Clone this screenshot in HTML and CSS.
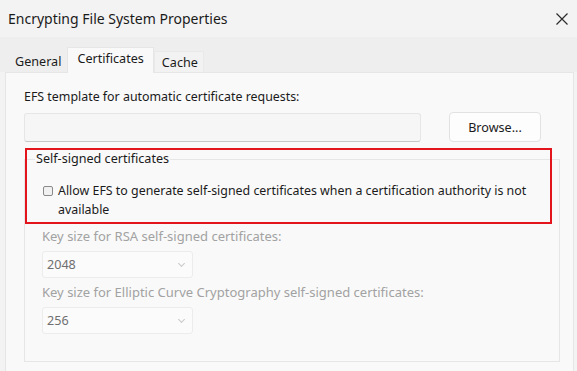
FILE: index.html
```html
<!DOCTYPE html>
<html lang="en">
<head>
  <meta charset="UTF-8" />
  <title>Encrypting File System Properties</title>
  <link rel="stylesheet" href="styles.css">
</head>
<body>
  <div class="window">
    <div class="titlebar">
      <span class="title">Encrypting File System Properties</span>
      <svg class="close" width="12" height="12" viewBox="0 0 12 12">
        <path d="M0.5 0.5 L11.5 11.5 M11.5 0.5 L0.5 11.5" stroke="#2b2b2b" stroke-width="1.2" fill="none"/>
      </svg>
    </div>

    <div class="tabs">
      <div class="tab">General</div>
      <div class="tab active">Certificates</div>
      <div class="tab boxed">Cache</div>
    </div>

    <div class="panel">
      <label class="label">EFS template for automatic certificate requests:</label>
      <div class="template-row">
        <input type="text" class="template-input" />
        <button class="btn">Browse...</button>
      </div>

      <fieldset class="group">
        <legend>Self-signed certificates</legend>
        <label class="check">
          <span class="box"></span>
          <span class="check-text">Allow EFS to generate self-signed certificates when a certification authority is not available</span>
        </label>

        <div class="disabled">
          <div class="label">Key size for RSA self-signed certificates:</div>
          <div class="select">2048 <span class="chev"></span></div>
          <div class="label">Key size for Elliptic Curve Cryptography self-signed certificates:</div>
          <div class="select">256 <span class="chev"></span></div>
        </div>
      </fieldset>

      <!-- annotation drawn on top of the screenshot -->
      <div class="highlight"></div>
    </div>
  </div>
</body>
</html>
```

FILE: styles.css
```css
body {
  margin: 0;
  font-family: "Noto Sans", "Open Sans", sans-serif;
  font-size: 12.4px;
  color: #1b1b1b;
  background: #f3f3f3;
  width: 577px;
  height: 371px;
  overflow: hidden;
}

.titlebar {
  height: 37px;
  display: flex;
  align-items: center;
  justify-content: space-between;
  padding: 0 9px 0 8px;
  background: #f3f3f3;
}

.title {
  font-size: 14px;
  color: #1a1a1a;
  margin-top: -1px;
}

.close {
  margin-top: 1px;
}

.tabs {
  height: 35px;
  background: #eeeeee;
  display: flex;
  align-items: flex-end;
  padding-left: 8px;
  box-sizing: border-box;
}

.tab {
  height: 22px;
  line-height: 22px;
  padding: 0 6px 0 7px;
  font-size: 12.6px;
  color: #1b1b1b;
  margin-bottom: -1px;
  position: relative;
  box-sizing: border-box;
}

.tab.active {
  height: 26px;
  line-height: 22px;
  padding: 0 9px;
  background: #f9f9f9;
  border: 1px solid #e6e6e6;
  border-bottom: none;
  z-index: 1;
}

.tab.boxed {
  background: #f2f2f2;
  border: 1px solid #e9e9e9;
  border-bottom: none;
  line-height: 21px;
  padding: 0 7px;
  width: 50px;
}

.panel {
  position: relative;
  margin: 0 3px 0 5px;
  background: #f9f9f9;
  border: 1px solid #e6e6e6;
  padding: 15px 13px 12px 18px;
}

.label {
  display: block;
  line-height: 18px;
}

.template-row {
  display: flex;
  align-items: center;
  margin-top: 6px;
  height: 30px;
}

.template-input {
  width: 397px;
  height: 29px;
  box-sizing: border-box;
  margin: 1px 0 0 0;
  padding: 0 6px;
  background: #f6f6f6;
  border: 1px solid #e6e6e6;
  border-bottom-color: #c6c6c6;
  border-radius: 3px;
}

.btn {
  margin-left: 28px;
  width: 92px;
  height: 30px;
  box-sizing: border-box;
  background: #fdfdfd;
  border: 1px solid #e2e2e2;
  border-radius: 4px;
  font-family: inherit;
  font-size: 12.6px;
  color: #1b1b1b;
  padding: 0;
}

.group {
  margin: 8px 0 0 0;
  padding: 0 10px 22px 10px;
  border: 1px solid #e6e6e6;
  min-width: 0;
}

.group legend {
  padding: 0 1px;
  line-height: 18px;
  font-size: 12.6px;
}

.check {
  display: flex;
  align-items: flex-start;
  margin: 13px 0 0 8px;
  line-height: 19px;
}

.box {
  flex: none;
  width: 8px;
  height: 8px;
  margin: 5px 5px 0 0;
  border: 1px solid #8a8a8a;
  border-radius: 2px;
  background: #f1f1f1;
}

.check-text {
  max-width: 478px;
}

.disabled {
  margin: 8px 0 0 7px;
  color: #a2a2a2;
}

.disabled .label {
  line-height: 18px;
  font-size: 13px;
}

.select {
  display: flex;
  align-items: center;
  justify-content: space-between;
  width: 151px;
  height: 27px;
  box-sizing: border-box;
  margin: 6px 0 5px 0;
  padding: 0 8px 0 4px;
  background: #fbfbfb;
  border: 1px solid #ececec;
  border-radius: 3px;
  color: #6f6f6f;
  font-size: 12.6px;
}

.chev {
  width: 4px;
  height: 4px;
  border-right: 1px solid #c8c8c8;
  border-bottom: 1px solid #c8c8c8;
  transform: rotate(45deg);
  margin-top: -3px;
}

.highlight {
  position: absolute;
  left: 19px;
  top: 75px;
  width: 523px;
  height: 72px;
  border: 2px solid #e3141c;
}
```
